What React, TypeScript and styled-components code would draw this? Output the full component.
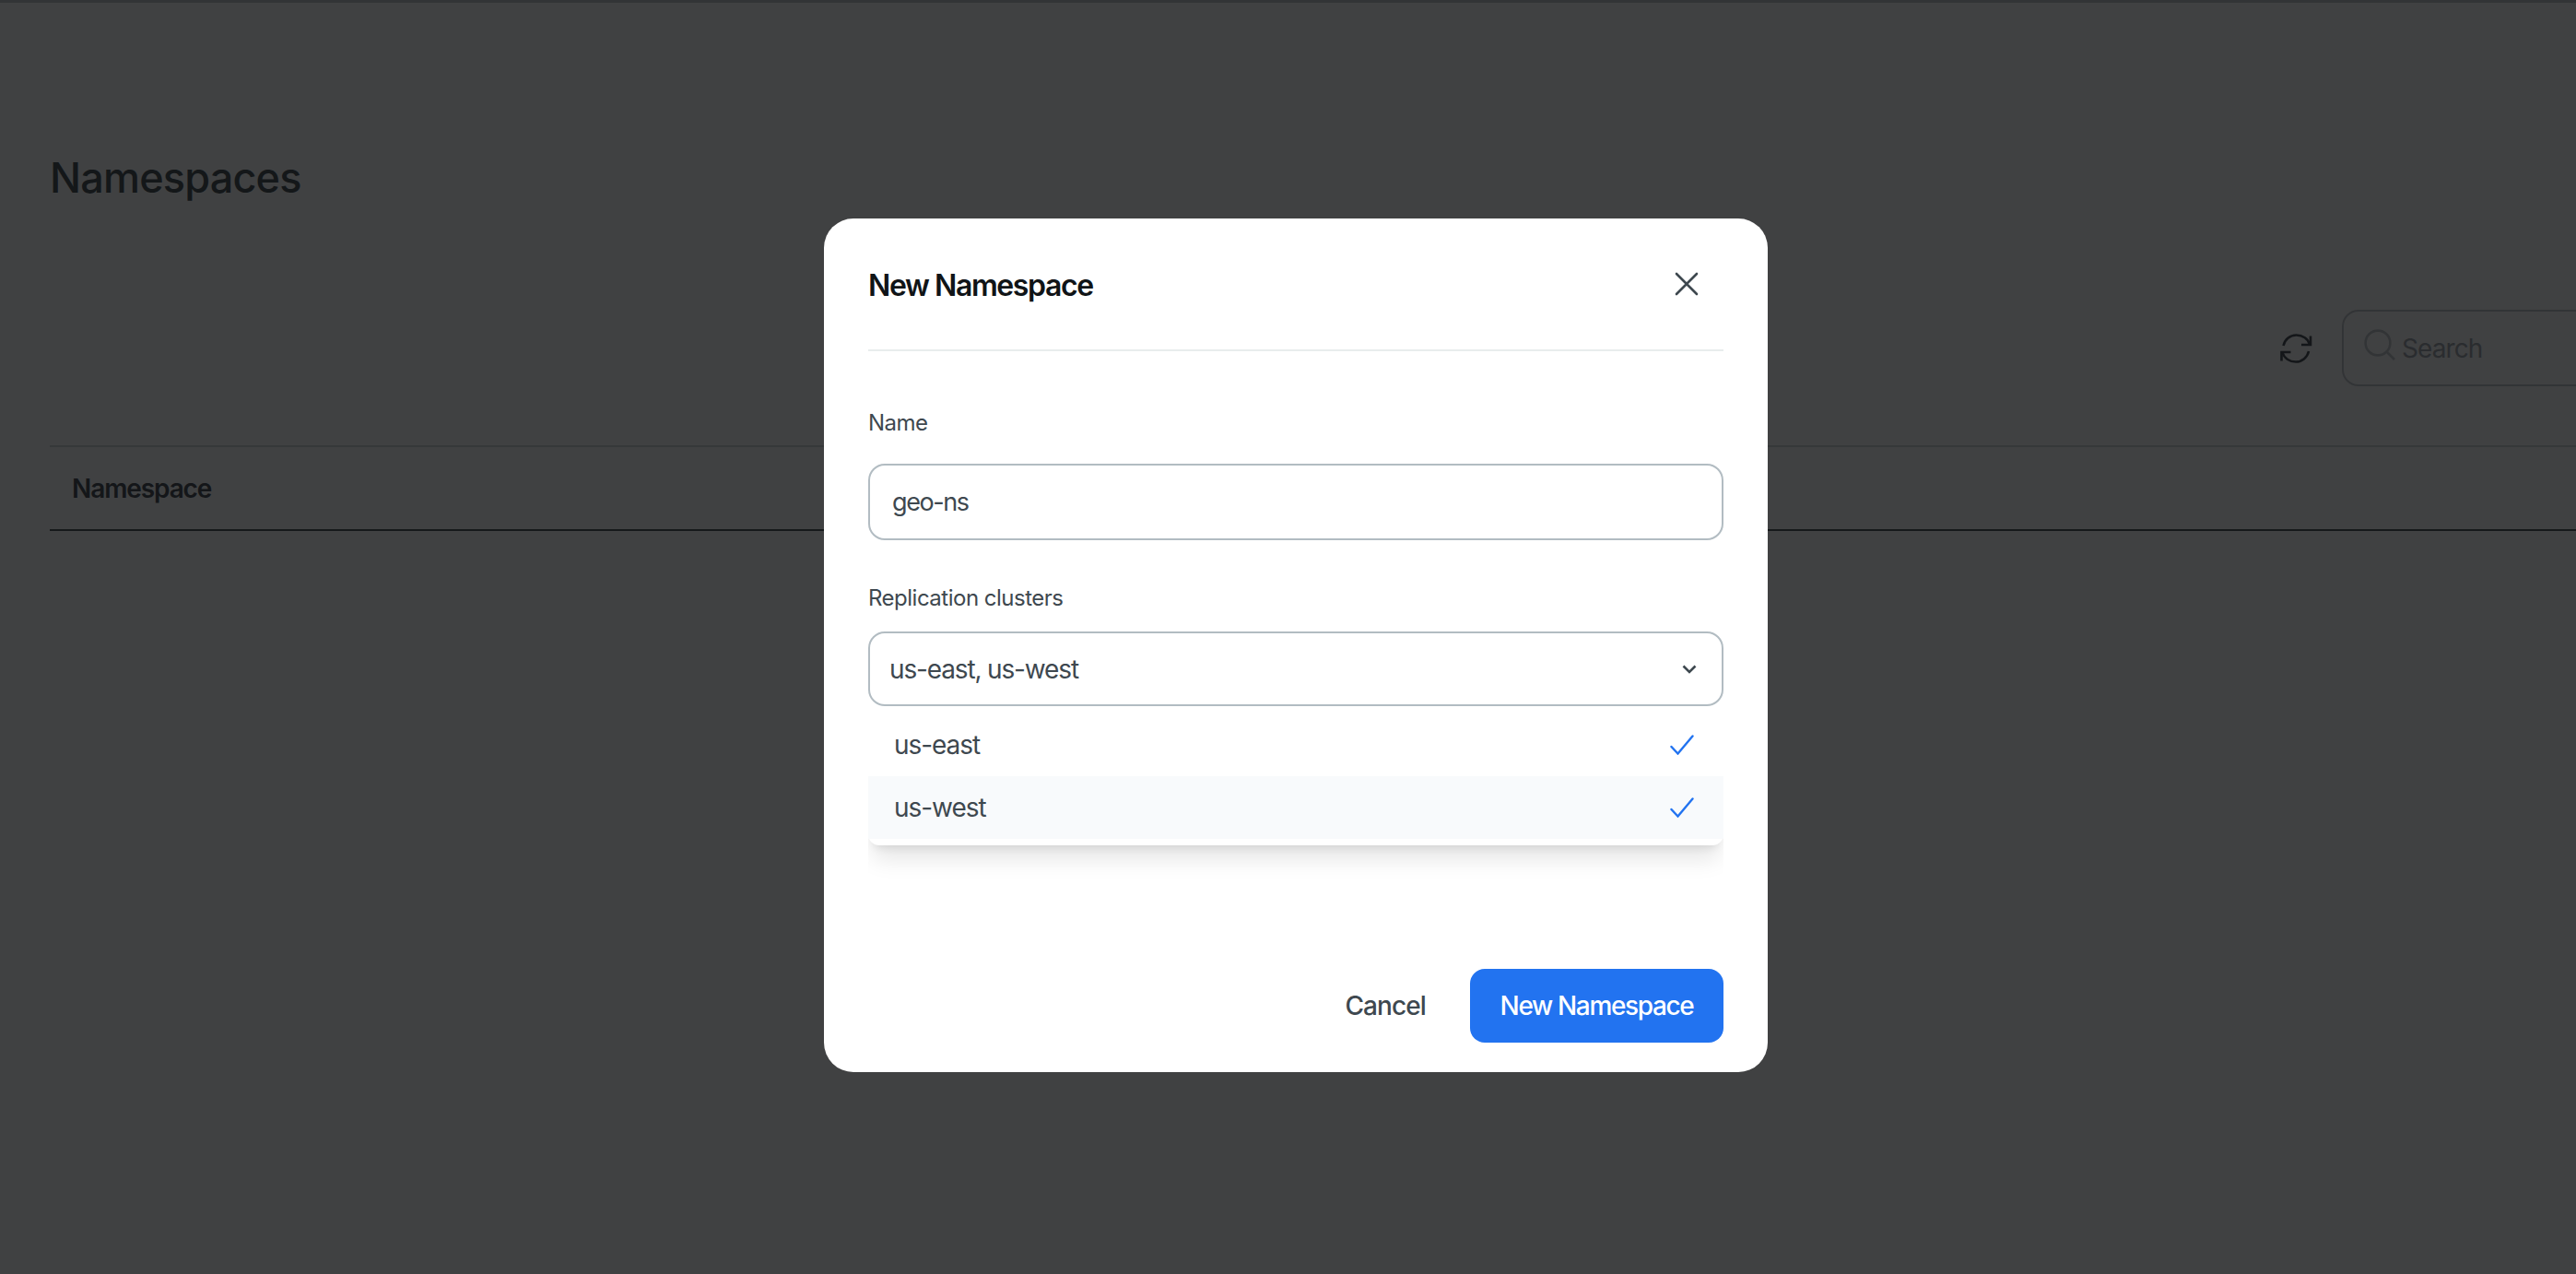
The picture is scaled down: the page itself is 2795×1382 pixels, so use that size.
import React from "react";
import styled, { createGlobalStyle } from "styled-components";

const GlobalStyle = createGlobalStyle`
  html, body {
    margin: 0;
    padding: 0;
    width: 100%;
    height: 100%;
    overflow: hidden;
    background: #fff;
    font-family: Inter, "Liberation Sans", sans-serif;
  }
  * {
    box-sizing: border-box;
  }
`;

const App = () => {
  return (
    <>
      <GlobalStyle />
      <Page>
        <PageTitle>Namespaces</PageTitle>
        <Toolbar>
          <svg width="40" height="40" viewBox="0 0 40 40" fill="none" stroke="#50565c" strokeWidth="2.6">
            <path d="M35 15.5C33.2 9.5 27.5 5.5 20.5 5.5C13.5 5.5 8 10.5 6.5 17" />
            <path d="M36 6.5V16H26" />
            <path d="M5.5 24.5C7.3 30.5 13 34.5 20 34.5C27 34.5 32.5 29.5 34 23" />
            <path d="M4.5 33.5V24H14.5" />
          </svg>
          <SearchBox>
            <svg width="36" height="36" viewBox="0 0 36 36" fill="none" stroke="#c8ccd0" strokeWidth="2.6">
              <circle cx="15" cy="15" r="13.4" />
              <path d="M25 25L33 33" />
            </svg>
            <SearchText>Search</SearchText>
          </SearchBox>
        </Toolbar>
        <TableHead>
          <HeadCell>Namespace</HeadCell>
        </TableHead>
      </Page>
      <Overlay>
        <Modal>
          <ModalHeader>
            <ModalTitle>New Namespace</ModalTitle>
            <CloseButton>
              <svg width="26" height="26" viewBox="0 0 26 26" fill="none" stroke="#3e484f" strokeWidth="2.6" strokeLinecap="round">
                <path d="M2 2L24 24M24 2L2 24" />
              </svg>
            </CloseButton>
          </ModalHeader>
          <Field>
            <Label>Name</Label>
            <TextInput readOnly value="geo-ns" />
          </Field>
          <Field>
            <Label>Replication clusters</Label>
            <SelectButton>
              <span>us-east, us-west</span>
              <svg width="16" height="10" viewBox="0 0 16 10" fill="none" stroke="#3e484f" strokeWidth="2.6">
                <path d="M1.5 1.5L8 8L14.5 1.5" />
              </svg>
            </SelectButton>
          </Field>
          <MenuClip>
            <Menu>
              <Option>
                us-east
                <Check />
              </Option>
              <Option $active>
                us-west
                <Check />
              </Option>
            </Menu>
          </MenuClip>
          <Footer>
            <CancelButton>Cancel</CancelButton>
            <PrimaryButton>New Namespace</PrimaryButton>
          </Footer>
        </Modal>
      </Overlay>
    </>
  );
};

export default App;

const Check = () => (
  <svg width="26" height="22" viewBox="0 0 26 22" fill="none" stroke="#2273f0" strokeWidth="2.4" strokeLinecap="round">
    <path d="M1.5 13L8.5 20.5L24.5 1.5" />
  </svg>
);

const Page = styled.div`
  width: 2960px;
  height: 1382px;
  padding: 0 0 0 54px;
  border-top: 3px solid #c8ccd0;
  display: flex;
  flex-direction: column;
`;

const PageTitle = styled.h1`
  margin: 160px 0 0;
  font-size: 45px;
  line-height: 60px;
  font-weight: 500;
  letter-spacing: -0.8px;
  color: #50585e;
`;

const Toolbar = styled.div`
  margin-top: 113px;
  height: 83px;
  display: flex;
  align-items: center;
  justify-content: flex-end;
  gap: 30px;
`;

const SearchBox = styled.div`
  width: 419px;
  height: 83px;
  border: 2px solid #c8cbcf;
  border-radius: 18px;
  padding: 0 0 6px 22px;
  display: flex;
  align-items: center;
  gap: 5px;
`;

const SearchText = styled.span`
  font-size: 28px;
  letter-spacing: -0.9px;
  color: #a8adb3;
  padding-top: 6px;
`;

const TableHead = styled.div`
  margin-top: 64px;
  height: 93px;
  border-top: 2px solid #d8dadc;
  border-bottom: 2px solid #5a5f66;
  padding-left: 24px;
  display: flex;
  align-items: center;
`;

const HeadCell = styled.div`
  font-size: 28px;
  font-weight: 600;
  letter-spacing: -1.1px;
  color: #50565c;
`;

const Overlay = styled.div`
  position: fixed;
  inset: 0;
  background: rgba(0, 1, 3, 0.75);
  display: flex;
  justify-content: center;
  align-items: flex-start;
  padding: 237px 0 0 17px;
`;

const Modal = styled.div`
  width: 1024px;
  height: 926px;
  background: #fff;
  border-radius: 32px;
  padding: 48px 48px 32px;
  display: flex;
  flex-direction: column;
`;

const ModalHeader = styled.div`
  height: 96px;
  padding: 3px 0 47px;
  border-bottom: 2px solid #e8eded;
  display: flex;
  align-items: center;
  justify-content: space-between;
`;

const ModalTitle = styled.h2`
  margin: 0;
  font-size: 32px;
  line-height: 46px;
  font-weight: 600;
  letter-spacing: -1.4px;
  color: #101417;
`;

const CloseButton = styled.div`
  width: 26px;
  height: 26px;
  margin: 0 27px 4px 0;
  display: flex;
`;

const Field = styled.div`
  margin-top: 60px;
  display: flex;
  flex-direction: column;
  gap: 26px;

  & + & {
    margin-top: 45px;
    gap: 18px;
  }
`;

const Label = styled.label`
  font-size: 24px;
  line-height: 36px;
  letter-spacing: -0.5px;
  color: #3e484f;
`;

const TextInput = styled.input`
  width: 100%;
  height: 83px;
  border: 2px solid #b2bcc2;
  border-radius: 18px;
  padding: 0 24px;
  font: 400 27px Inter, sans-serif;
  letter-spacing: -1.4px;
  color: #3e484f;
  outline: none;
`;

const SelectButton = styled.div`
  height: 81px;
  border: 2px solid #b2bcc2;
  border-radius: 18px;
  padding: 0 27px 0 21px;
  display: flex;
  align-items: center;
  justify-content: space-between;
  font-size: 28px;
  letter-spacing: -1.15px;
  color: #3e484f;
`;

const MenuClip = styled.div`
  margin-top: 8px;
  padding-bottom: 60px;
  overflow: hidden;
`;

const Menu = styled.div`
  background: #fff;
  border-radius: 0 0 12px 12px;
  padding-bottom: 7px;
  box-shadow: 0 20px 25px -5px rgba(0, 0, 0, 0.1), 0 8px 10px -6px rgba(0, 0, 0, 0.1);
`;

const Option = styled.div<{ $active?: boolean }>`
  height: 68px;
  padding: 0 32px 0 28px;
  display: flex;
  align-items: center;
  justify-content: space-between;
  font-size: 28px;
  letter-spacing: -1.05px;
  color: #3e484f;
  background: ${(p) => (p.$active ? "#f8fafc" : "#fff")};
`;

const Footer = styled.div`
  margin-top: auto;
  display: flex;
  justify-content: flex-end;
  align-items: center;
  gap: 48px;
`;

const CancelButton = styled.div`
  font-size: 28px;
  font-weight: 500;
  letter-spacing: -0.9px;
  color: #3e484f;
`;

const PrimaryButton = styled.div`
  width: 275px;
  height: 80px;
  background: #2273f0;
  border-radius: 16px;
  color: #fff;
  font-size: 28px;
  font-weight: 500;
  letter-spacing: -1.35px;
  display: flex;
  align-items: center;
  justify-content: center;
`;
